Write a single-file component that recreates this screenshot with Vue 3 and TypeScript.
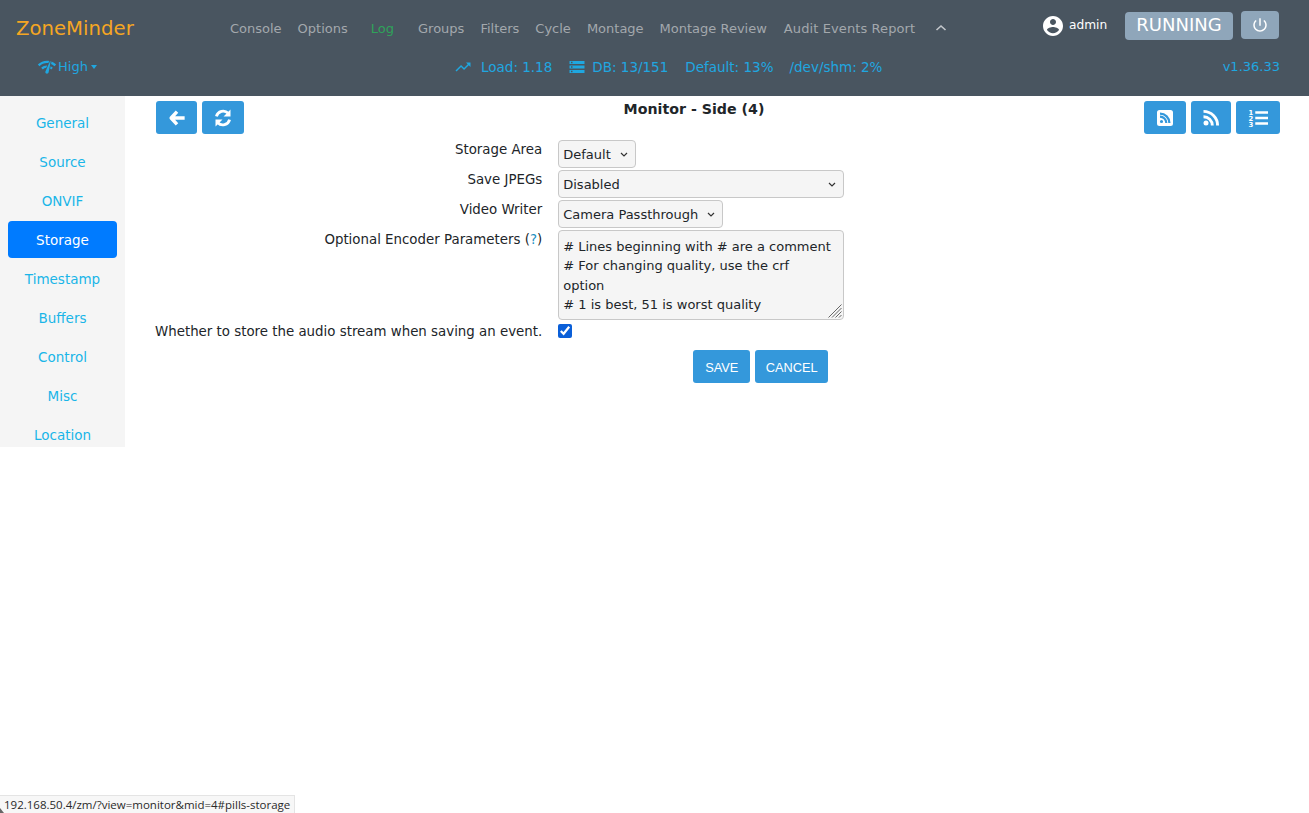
<template>
  <div class="page">
    <header class="navbar">
      <div class="nav-top">
        <a class="brand">ZoneMinder</a>
        <nav class="menu">
          <a v-for="item in menuItems" :key="item" class="menu-link" :class="{ log: item === 'Log', audit: item.startsWith('Audit') }">{{ item }}</a>
          <svg class="chevron" viewBox="0 0 12 8"><path d="M1.500 6 6 2l4.500 4" fill="none" stroke="currentColor" stroke-width="1.600" /></svg>
        </nav>
        <div class="user">
          <svg class="user-icon" viewBox="0 0 24 24"><path fill="currentColor" d="M12 2C6.480 2 2 6.480 2 12s4.480 10 10 10 10-4.480 10-10S17.520 2 12 2zm0 3c1.660 0 3 1.340 3 3s-1.340 3-3 3-3-1.340-3-3 1.340-3 3-3zm0 14.200c-2.500 0-4.710-1.280-6-3.220.03-1.990 4-3.080 6-3.080 1.990 0 5.970 1.090 6 3.080-1.290 1.940-3.500 3.220-6 3.220z" /></svg>
          <span class="user-name">admin</span>
        </div>
        <button class="state-btn"><span>RUNNING</span></button>
        <button class="power-btn">
          <svg viewBox="0 0 24 24"><path fill="currentColor" d="M13 3h-2v10h2V3zm4.830 2.170l-1.420 1.420C17.990 7.860 19 9.810 19 12c0 3.870-3.130 7-7 7s-7-3.130-7-7c0-2.190 1.010-4.140 2.580-5.420L6.170 5.170C4.230 6.820 3 9.260 3 12c0 4.970 4.030 9 9 9s9-4.030 9-9c0-2.740-1.230-5.180-3.170-6.830z" /></svg>
        </button>
      </div>
      <div class="nav-bottom">
        <div class="bandwidth">
          <svg class="bw-icon" viewBox="0 0 24 24"><path fill="currentColor" d="M15.900 5c-.17 0-.32.09-.41.230l-.07.150-5.180 11.650c-.16.290-.26.610-.26.960 0 1.110.9 2.010 2.010 2.010.96 0 1.770-.68 1.960-1.590l.01-.03L16.400 5.500c0-.28-.22-.5-.5-.5zM1 9l2 2c2.880-2.880 6.790-4.080 10.530-3.620l1.190-2.680C9.890 3.840 4.740 5.270 1 9zm20 2l2-2c-1.640-1.640-3.550-2.820-5.590-3.570l-.53 2.820c1.500.62 2.900 1.530 4.120 2.750zm-4 4l2-2c-.8-.8-1.700-1.420-2.660-1.890l-.55 2.920c.42.27.83.59 1.210.97zM5 13l2 2c1.130-1.130 2.560-1.790 4.030-2l1.280-2.880c-2.630-.08-5.300.87-7.310 2.880z" /></svg>
          <span>High</span>
          <i class="caret"></i>
        </div>
        <div class="stats">
          <svg class="stat-icon" viewBox="0 0 24 24"><path fill="currentColor" d="M16 6l2.290 2.290-4.880 4.880-4-4L2 16.590 3.410 18l6-6 4 4 6.300-6.290L22 12V6z" /></svg>
          <span class="stat-load">Load: 1.18</span>
          <svg class="stat-icon" viewBox="0 0 24 24"><path fill="currentColor" d="M2 20h20v-4H2v4zm2-3h2v2H4v-2zM2 4v4h20V4H2zm4 3H4V5h2v2zm-4 7h20v-4H2v4zm2-3h2v2H4v-2z" /></svg>
          <span class="stat-db">DB: 13/151</span>
          <span class="stat-disk">Default: 13%</span>
          <span>/dev/shm: 2%</span>
        </div>
        <div class="version">v1.36.33</div>
      </div>
    </header>

    <main class="main">
      <aside class="sidebar">
        <a v-for="tab in tabs" :key="tab" class="tab" :class="{ active: tab === 'Storage' }">{{ tab }}</a>
      </aside>

      <section class="content">
        <div class="toolbar">
          <div class="btn-group">
            <button class="icon-btn wide back">
              <svg viewBox="0 0 20 20"><path fill="none" stroke="currentColor" stroke-width="3.800" stroke-linejoin="round" d="M10 3 3.500 10l6.500 7M4 10h14.500" /></svg>
            </button>
            <button class="icon-btn wider">
              <svg viewBox="0 0 20 20"><path fill="none" stroke="currentColor" stroke-width="2.800" d="M3.400 8.400A7 7 0 0 1 15.200 5.300M16.600 11.600A7 7 0 0 1 4.800 14.700" /><path fill="currentColor" d="M17.500 1.500v7h-7zM2.500 18.500v-7h7z" /></svg>
            </button>
          </div>
          <h1 class="title">Monitor - Side (4)</h1>
          <div class="btn-group">
            <button class="icon-btn wider">
              <svg viewBox="0 0 20 20"><path fill="currentColor" fill-rule="evenodd" d="M4.500 2h11A2.500 2.500 0 0 1 18 4.500v11a2.500 2.500 0 0 1-2.500 2.500h-11A2.500 2.500 0 0 1 2 15.500v-11A2.500 2.500 0 0 1 4.500 2zM5 7.600v2.200a5.200 5.200 0 0 1 5.200 5.200h2.200A7.400 7.400 0 0 0 5 7.600zM5 4.500v2.200a8.300 8.300 0 0 1 8.300 8.300h2.200A10.500 10.500 0 0 0 5 4.500zM6.500 11.900a1.600 1.600 0 1 0 0 3.200 1.600 1.600 0 0 0 0-3.200z" /></svg>
            </button>
            <button class="icon-btn">
              <svg viewBox="0 0 20 20"><circle cx="5" cy="15" r="2.500" fill="currentColor" /><path fill="none" stroke="currentColor" stroke-width="2.900" d="M2.500 8.700a8.800 8.800 0 0 1 8.800 8.800M2.500 3.400a14.100 14.100 0 0 1 14.100 14.100" /></svg>
            </button>
            <button class="icon-btn list">
              <svg viewBox="0 0 22 20">
                <path fill="none" stroke="currentColor" stroke-width="2.600" d="M8 4h14M8 10h14M8 16h14" />
                <text class="list-num" x="0.500" y="6.500">1</text>
                <text class="list-num" x="0.500" y="13">2</text>
                <text class="list-num" x="0.500" y="19.500">3</text>
              </svg>
            </button>
          </div>
        </div>

        <form class="form" @submit.prevent>
          <label class="field-label">Storage Area</label>
          <div class="field"><select class="select"><option>Default</option></select></div>

          <label class="field-label">Save JPEGs</label>
          <div class="field"><select class="select full"><option>Disabled</option></select></div>

          <label class="field-label">Video Writer</label>
          <div class="field"><select class="select"><option>Camera Passthrough</option></select></div>

          <label class="field-label">Optional Encoder Parameters (<a class="help">?</a>)</label>
          <div class="field text-field">
            <textarea class="textarea" :value="encoderParams" rows="4"></textarea>
            <svg class="grip" viewBox="0 0 14 14"><path d="M13.500 .5 .5 13.500M13.500 4 4 13.500M13.500 7.500l-6 6M13.500 11l-2.500 2.500" fill="none" stroke="#666" stroke-width="1" /></svg>
          </div>

          <label class="field-label">Whether to store the audio stream when saving an event.</label>
          <div class="field check"><input type="checkbox" class="checkbox" checked /></div>

          <div class="actions">
            <button class="action-btn save" type="button">SAVE</button>
            <button class="action-btn cancel" type="button">CANCEL</button>
          </div>
        </form>
      </section>
    </main>

    <div class="status-tip"><i class="cursor-bit"></i>192.168.50.4/zm/?view=monitor&amp;mid=4#pills-storage</div>
  </div>
</template>

<script setup lang="ts">
const menuItems = [
  'Console',
  'Options',
  'Log',
  'Groups',
  'Filters',
  'Cycle',
  'Montage',
  'Montage Review',
  'Audit Events Report',
];

const tabs = ['General', 'Source', 'ONVIF', 'Storage', 'Timestamp', 'Buffers', 'Control', 'Misc', 'Location'];

const encoderParams = `# Lines beginning with # are a comment
# For changing quality, use the crf option
# 1 is best, 51 is worst quality`;
</script>

<style>
html,
body {
  margin: 0;
  background: #fff;
}
</style>

<style scoped>
.page {
  min-height: 813px;
  font-family: "DejaVu Sans", sans-serif;
  font-size: 13px;
  color: #212529;
}

.navbar {
  height: 96px;
  background: #495560;
  box-sizing: border-box;
}

.nav-top {
  display: flex;
  align-items: center;
  height: 56px;
  padding-left: 16px;
}

.brand {
  width: 214px;
  font-size: 19.700px;
  color: #f5a623;
}

.menu {
  display: flex;
  align-items: center;
  width: 811px;
}

.menu-link {
  margin-right: 16px;
  color: #a3a8ad;
  white-space: nowrap;
}

.menu-link.log {
  margin-left: 7px;
  margin-right: 24px;
  color: #2fa35a;
}

.menu-link.audit {
  margin-left: 1px;
  letter-spacing: 0.1px;
}

.chevron {
  width: 12px;
  height: 8px;
  margin-left: 4px;
  color: #c3c7cb;
}

.user {
  display: flex;
  align-items: center;
  gap: 4px;
  width: 84px;
  margin-top: -4px;
  color: #fff;
}

.user-name {
  margin-top: -3px;
  font-size: 12.200px;
}

.user-icon {
  width: 24px;
  height: 24px;
}

.state-btn {
  width: 108px;
  height: 28px;
  margin-top: -4px;
  padding: 0 0 4px;
  border: 0;
  border-radius: 4px;
  background: #8fa6ba;
  color: #fff;
  font-family: inherit;
  font-size: 18px;
}

.power-btn {
  display: flex;
  align-items: center;
  justify-content: center;
  width: 38px;
  height: 28px;
  margin: -6px 0 0 8px;
  padding: 0;
  border: 0;
  border-radius: 4px;
  background: #8fa6ba;
  color: #fff;
}

.power-btn svg {
  width: 18px;
  height: 18px;
}

.nav-bottom {
  display: flex;
  align-items: center;
  height: 21px;
  color: #1fa7e0;
}

.bandwidth {
  display: flex;
  align-items: center;
  gap: 1px;
  width: 416.500px;
  padding-left: 37px;
}

.bw-icon {
  width: 20px;
  height: 20px;
}

.caret {
  margin-left: 2px;
  border-top: 4px solid currentColor;
  border-left: 3.500px solid transparent;
  border-right: 3.500px solid transparent;
}

.stats {
  display: flex;
  align-items: center;
  font-size: 13.500px;
}

.stat-icon {
  width: 18px;
  height: 18px;
}

.stat-load {
  margin: 0 16px 0 9.500px;
}

.stat-db {
  margin: 0 17px 0 6px;
}

.stat-disk {
  margin-right: 16px;
}

.version {
  margin-left: auto;
  padding-right: 29px;
}

.main {
  display: flex;
  align-items: flex-start;
}

.sidebar {
  display: flex;
  flex-direction: column;
  gap: 2px;
  width: 125px;
  height: 351px;
  box-sizing: border-box;
  padding: 8px 8px 0;
  background: #f5f5f5;
  overflow: hidden;
  flex-shrink: 0;
}

.tab {
  flex-shrink: 0;
  height: 37px;
  border-radius: 4px;
  color: #1ab5e8;
  font-size: 13.500px;
  line-height: 39px;
  text-align: center;
}

.tab.active {
  background: #007bff;
  color: #fff;
  line-height: 38px;
}

.content {
  flex: 1;
  padding: 5px 29px 0 30px;
}

.toolbar {
  display: flex;
  justify-content: space-between;
  margin-left: 1px;
}

.btn-group {
  display: flex;
  gap: 5px;
}

.title {
  margin: 0;
  font-size: 14.200px;
  font-weight: 700;
  line-height: 17px;
}

.icon-btn {
  display: flex;
  align-items: center;
  justify-content: center;
  width: 40px;
  height: 33px;
  padding: 0;
  border: 0;
  border-radius: 3px;
  background: #3498db;
  color: #fff;
}

.icon-btn.wide {
  width: 41px;
}

.icon-btn.wider {
  width: 42px;
}

.icon-btn.list {
  width: 44px;
}

.icon-btn svg {
  width: 20px;
  height: 20px;
}

.icon-btn.back svg {
  width: 18px;
  height: 18px;
}

.list-num {
  font-family: "DejaVu Sans", sans-serif;
  font-size: 7.500px;
  font-weight: 700;
  fill: currentColor;
}

.form {
  display: grid;
  grid-template-columns: max-content 286px;
  column-gap: 16px;
  row-gap: 2px;
  justify-content: start;
  margin-top: 6px;
}

.field-label {
  padding-top: 1px;
  font-size: 13.360px;
  line-height: 18px;
  text-align: right;
}

.help {
  color: #1a8fbf;
}

.field {
  display: flex;
}

.text-field {
  position: relative;
}

.select {
  height: 28px;
  box-sizing: border-box;
  padding: 0 23.500px 0 4px;
  border: 1px solid #c8c8c8;
  border-radius: 4px;
  appearance: none;
  background: #f5f5f5 url("data:image/svg+xml,%3Csvg xmlns='http://www.w3.org/2000/svg' viewBox='0 0 8 5'%3E%3Cpath d='M1 1l3 3 3-3' fill='none' stroke='%23333' stroke-width='1.200'/%3E%3C/svg%3E") no-repeat right 7px center / 8px 5px;
  color: #212529;
  font-family: inherit;
  font-size: 13px;
}

.select.full {
  width: 100%;
}

.textarea {
  display: block;
  width: 100%;
  height: 90px;
  box-sizing: border-box;
  margin: 0;
  padding: 6px 10.500px 6px 4px;
  border: 1px solid #c8c8c8;
  border-radius: 4px;
  background: #f5f5f5;
  color: #212529;
  font-family: inherit;
  font-size: 13px;
  line-height: 19.300px;
  resize: none;
  overflow: hidden;
}

.grip {
  position: absolute;
  right: 2px;
  bottom: 2px;
  width: 14px;
  height: 14px;
}

.check {
  align-items: flex-start;
  padding-top: 2px;
}

.checkbox {
  width: 14px;
  height: 14px;
  margin: 0;
  accent-color: #0a5fd8;
}

.actions {
  grid-column: 1 / -1;
  display: flex;
  justify-content: flex-end;
  gap: 5px;
  margin-top: 7px;
  padding-right: 16px;
}

.action-btn {
  height: 33px;
  padding: 1px 0 0;
  border: 0;
  border-radius: 3px;
  background: #3498db;
  color: #fff;
  font-family: "Liberation Sans", Arial, sans-serif;
  font-size: 12.800px;
}

.action-btn.save {
  width: 57px;
}

.action-btn.cancel {
  width: 73px;
}

.status-tip {
  position: absolute;
  left: 0;
  bottom: 0;
  width: 295px;
  height: 18px;
  box-sizing: border-box;
  padding-left: 4px;
  border: 1px solid #e4e4e4;
  border-left: 0;
  border-bottom: 0;
  background: #f7f7f7;
  color: #2a2a2a;
  font-family: "Open Sans", sans-serif;
  font-size: 11.500px;
  line-height: 18px;
  white-space: nowrap;
}

.cursor-bit {
  position: absolute;
  left: 0;
  bottom: 0;
  width: 4px;
  height: 5px;
  background: #666;
  clip-path: polygon(0 100%, 0 0, 100% 100%);
}
</style>
